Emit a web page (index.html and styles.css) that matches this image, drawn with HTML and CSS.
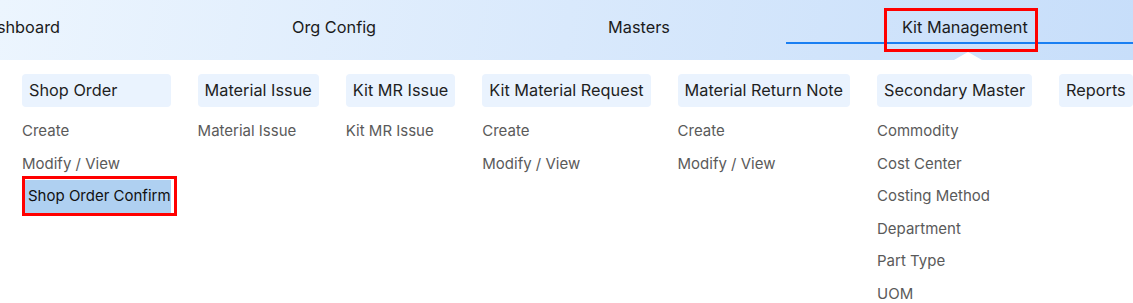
FILE: index.html
```html
<!DOCTYPE html>
<html lang="en">
  <head>
    <meta charset="UTF-8" />
    <meta name="viewport" content="width=device-width, initial-scale=1.0" />
    <title>Kit Management</title>
    <link rel="stylesheet" href="styles.css">
  </head>
  <body>
    <header class="topbar">
      <nav class="tabs">
        <a class="tab">Dashboard</a>
        <a class="tab">Org Config</a>
        <a class="tab">Masters</a>
        <a class="tab tab--active"><span class="tab-label">Kit Management</span></a>
      </nav>
    </header>

    <div class="mega-menu">
      <div class="menu-col">
        <div class="menu-head">Shop Order</div>
        <a class="menu-item">Create</a>
        <a class="menu-item">Modify / View</a>
        <a class="menu-item menu-item--active">Shop Order Confirm</a>
      </div>
      <div class="menu-col">
        <div class="menu-head">Material Issue</div>
        <a class="menu-item">Material Issue</a>
      </div>
      <div class="menu-col">
        <div class="menu-head">Kit MR Issue</div>
        <a class="menu-item">Kit MR Issue</a>
      </div>
      <div class="menu-col">
        <div class="menu-head">Kit Material Request</div>
        <a class="menu-item">Create</a>
        <a class="menu-item">Modify / View</a>
      </div>
      <div class="menu-col">
        <div class="menu-head">Material Return Note</div>
        <a class="menu-item">Create</a>
        <a class="menu-item">Modify / View</a>
      </div>
      <div class="menu-col">
        <div class="menu-head">Secondary Master</div>
        <a class="menu-item">Commodity</a>
        <a class="menu-item">Cost Center</a>
        <a class="menu-item">Costing Method</a>
        <a class="menu-item">Department</a>
        <a class="menu-item">Part Type</a>
        <a class="menu-item">UOM</a>
      </div>
      <div class="menu-col">
        <div class="menu-head">Reports</div>
      </div>
    </div>
  </body>
</html>
```

FILE: styles.css
```css
*,
*::before,
*::after {
  box-sizing: border-box;
  margin: 0;
  padding: 0;
}

body {
  background-color: #fff;
  color: #1b1b1b;
  font-family: Inter, "Noto Sans", sans-serif;
  overflow: hidden;
}

.topbar {
  height: 60px;
  background: linear-gradient(100deg, #ecf5fe 0%, #d9e9fc 50%, #c7defa 100%);
  overflow: hidden;
}

.tabs {
  display: flex;
  margin-left: -140px;
}

.tab {
  position: relative;
  flex: none;
  height: 44px;
  padding: 17px 116px 0;
  font-size: 16.3px;
  line-height: 20px;
  color: #1b1b1b;
  white-space: nowrap;
}

.tab--active {
  border-bottom: 2px solid #1a7ff2;
}

/* little pointer from the active tab down into the menu */
.tab--active::before {
  content: "";
  position: absolute;
  top: 52px;
  left: calc(50% - 11px);
  border-left: 14px solid transparent;
  border-right: 14px solid transparent;
  border-bottom: 8px solid #fff;
}

.tab-label {
  position: relative;
  display: inline-block;
}

.tab-label::after {
  content: "";
  position: absolute;
  top: -9px;
  bottom: -15px;
  left: -18px;
  right: -10px;
  border: 3px solid #f00;
}

.mega-menu {
  display: flex;
  gap: 27px;
  padding: 14px 0 0 22px;
  white-space: nowrap;
}

.menu-col {
  display: flex;
  flex-direction: column;
  align-items: flex-start;
  flex: none;
}

.menu-head {
  height: 33px;
  margin-bottom: 8px;
  padding: 0 7px;
  border-radius: 4px;
  background-color: #eaf3fe;
  color: #1f1f1f;
  font-size: 16.3px;
  line-height: 33px;
}

.menu-col:first-child .menu-head {
  align-self: stretch;
}

.menu-item {
  display: block;
  color: #5a5a5a;
  font-size: 15px;
  line-height: 32.6px;
}

.menu-item--active {
  position: relative;
  padding: 0 0 0 6px;
  background-color: #afd0f1;
  color: #111;
}

.menu-item--active::after {
  content: "";
  position: absolute;
  top: -4px;
  bottom: -3px;
  left: 0;
  right: -6px;
  border: 3px solid #f00;
}
```
